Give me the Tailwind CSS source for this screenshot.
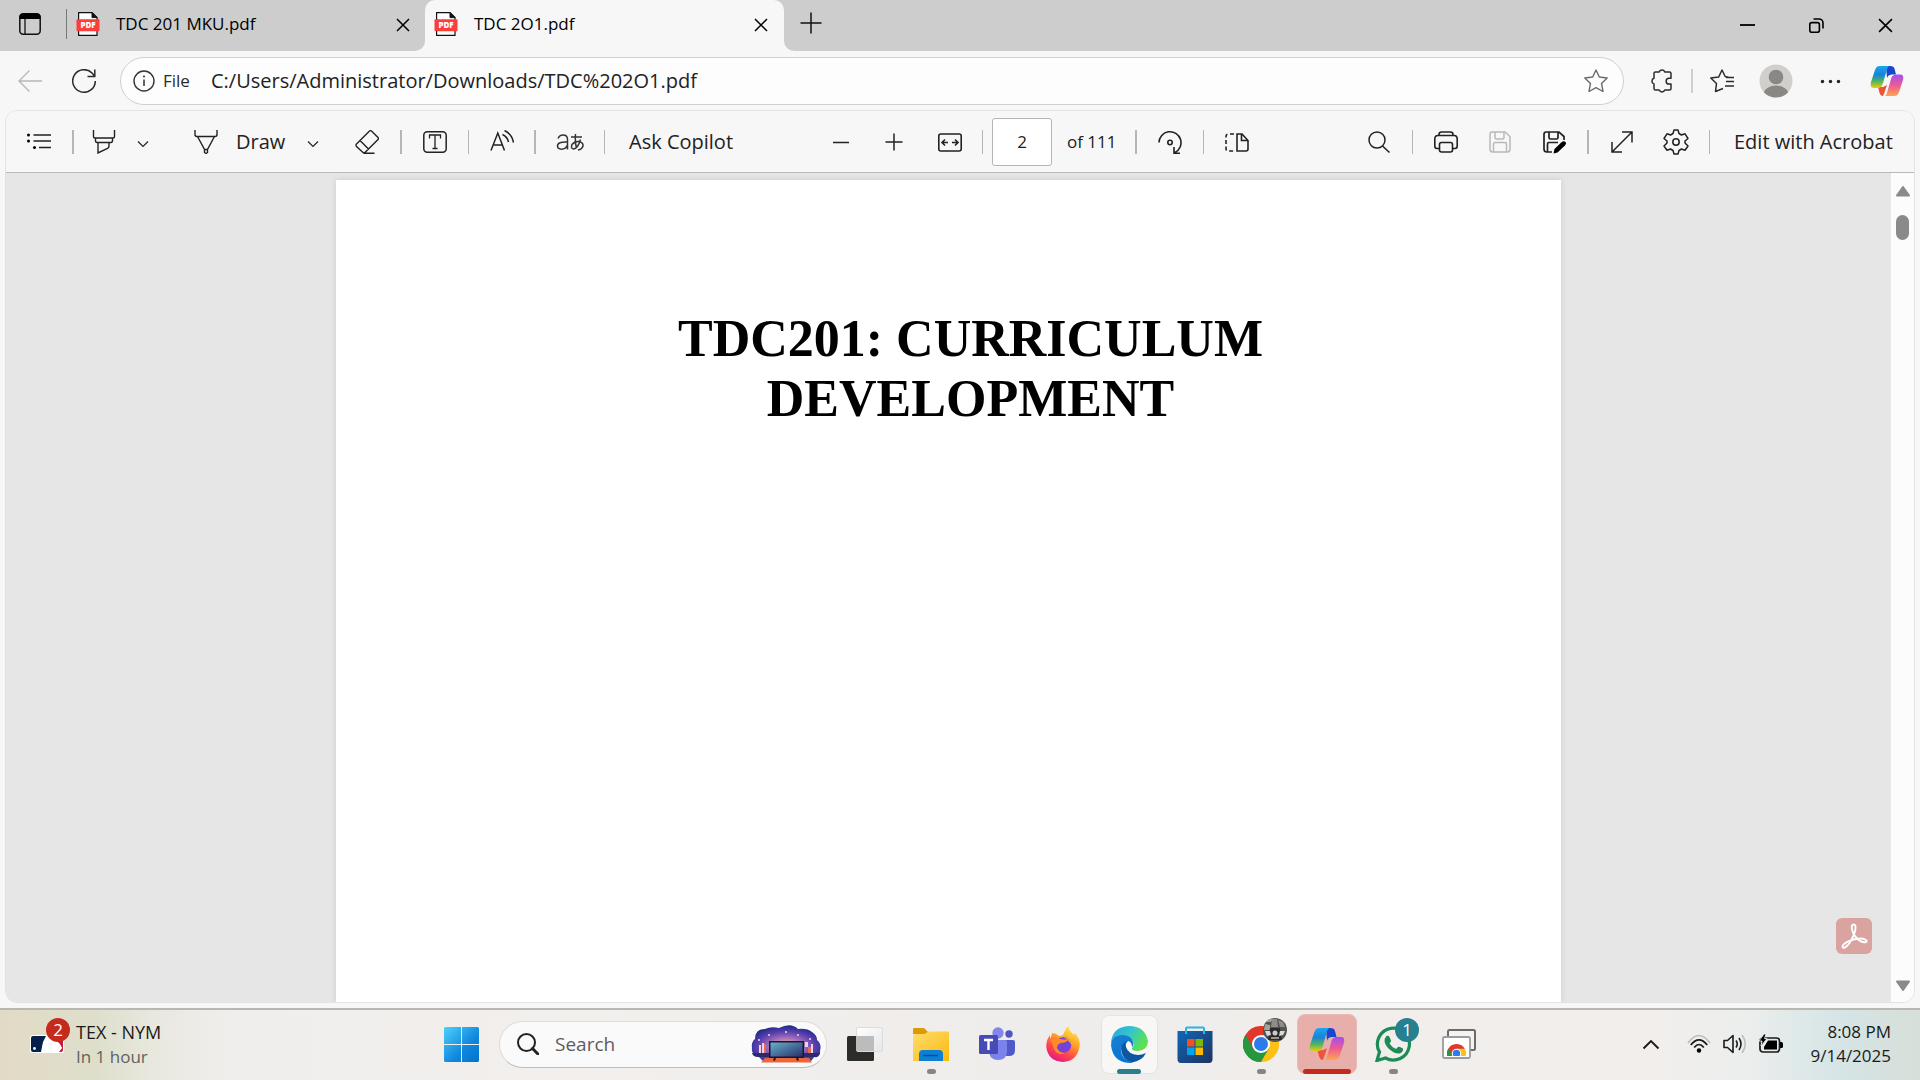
<!DOCTYPE html>
<html lang="en">
<head>
  <meta charset="UTF-8">
  <title>TDC 2O1.pdf</title>
  <script src="https://cdn.jsdelivr.net/npm/@tailwindcss/browser@4"></script>
</head>
<body class="h-screen flex flex-col overflow-hidden bg-[#f7f7f7] text-[#1b1b1b] font-['Open_Sans','Noto_Sans_CJK_JP',sans-serif]">

  <!-- Shared shapes -->
  <svg class="w-0 h-0" aria-hidden="true">
    <symbol id="pdf-file" viewBox="0 0 24 24">
      <path d="M2.6 .6H16L21 5.600V23.400H2.600Z" fill="#fff" stroke="#111" stroke-width="1.200"/>
      <path d="M16 .6V5.600H21Z" fill="#111" stroke="#111"/>
      <rect x="0.500" y="7.300" width="23" height="12" rx="1" fill="#fb3e3c"/>
    </symbol>
    <symbol id="cross" viewBox="0 0 14 14">
      <path d="M1 1 13 13M13 1 1 13" fill="none" stroke="currentColor" stroke-width="1.500"/>
    </symbol>
    <symbol id="chevron" viewBox="0 0 14 8">
      <path d="M2 1.500 7 6.500 12 1.500" fill="none" stroke="currentColor" stroke-width="1.200"/>
    </symbol>
    <linearGradient id="cp1" x1="0" y1="0" x2="0" y2="1"><stop offset="0" stop-color="#18a6f0"/><stop offset=".4" stop-color="#1684d8"/><stop offset=".7" stop-color="#52b65a"/><stop offset="1" stop-color="#f0cb10"/></linearGradient>
    <linearGradient id="cp2" x1="0" y1="0" x2="0" y2="1"><stop offset="0" stop-color="#a24ff0"/><stop offset=".5" stop-color="#ee5a94"/><stop offset="1" stop-color="#ffa54f"/></linearGradient>
    <symbol id="copilot" viewBox="0 0 34 32">
      <path d="M16 1H20C23 1 24 2 24.600 4L26 9.500H22C20 9.500 18 10 17 13Z" fill="#1a45cf"/>
      <path d="M8 22H13L17 20 14 29C13.500 30.500 13 31 12 31 10 30 9.600 28 9 26Z" fill="#ef5338"/>
      <path d="M10 1H20C18 1 17.400 3 16.800 5L13 18C12 21 11 23 7 23H4C.5 23 .3 20 1 17L5 5C6 2.500 7 1 10 1Z" fill="url(#cp1)"/>
      <path d="M24 31H14C16 31 16.600 29 17.200 27L21 14C22 11 23 9.500 27 9.500H30C33.500 9.500 33.700 12 33 15L29 27C28 29.500 27 31 24 31Z" fill="url(#cp2)"/>
    </symbol>
    <symbol id="chrome" viewBox="0 0 36 36">
      <path d="M18 18 2.400 9A18 18 0 0 1 33.600 9Z" fill="#e3372c"/>
      <path d="M18 18 33.600 9A18 18 0 0 1 18 36Z" fill="#fbc116"/>
      <path d="M18 18V36A18 18 0 0 1 2.400 9Z" fill="#26973f"/>
      <path d="M18 9H33.600L26 22Z" fill="#fbc116"/><path d="M10.200 22.500 2.400 9 18 9Z" fill="#e3372c"/><path d="M10.200 22.500 2.400 9A18 18 0 0 0 18 36L25.800 22.500Z" fill="#26973f"/>
      <circle cx="18" cy="18" r="9" fill="#fff"/><circle cx="18" cy="18" r="7" fill="#2b7bea"/>
    </symbol>
  </svg>

  <!-- Tab strip -->
  <header class="flex items-stretch h-[51px] bg-[#cdcdcd] text-black">
    <button class="w-[66px] pl-[19px] pb-1 flex items-center" aria-label="Tab actions">
      <svg class="w-[22px] h-[22px]" viewBox="0 0 22 22"><rect x=".8" y=".8" width="20.400" height="20.400" rx="3.500" fill="none" stroke="#111" stroke-width="1.500"/><path d="M.5 6V4A3.500 3.500 0 0 1 4 .5H18A3.500 3.500 0 0 1 21.500 4V6Z"/><path d="M6 6V21" stroke="#111" stroke-width="1.300"/></svg>
    </button>
    <div class="w-[359px] flex items-center pb-[3px]">
      <span class="w-px h-[30px] bg-[#777]"></span>
      <svg class="w-6 h-6 ml-[9px]" viewBox="0 0 24 24"><use href="#pdf-file"/><text x="12" y="16" text-anchor="middle" font-size="8" font-weight="800" fill="#fff">PDF</text></svg>
      <a href="#" class="ml-4 flex-1 text-[17px]">TDC 201 MKU.pdf</a>
      <button class="mr-[15px] mt-0.5" aria-label="Close tab"><svg class="w-3.5 h-3.5"><use href="#cross"/></svg></button>
    </div>
    <div class="relative w-[359px] flex items-center pb-[3px] bg-[#f7f7f7] rounded-t-[10px]">
      <svg class="absolute bottom-0 -left-[10px] w-[10px] h-[10px]" viewBox="0 0 10 10"><path d="M10 0V10H0A10 10 0 0 0 10 0Z" fill="#f7f7f7"/></svg>
      <svg class="absolute bottom-0 -right-[10px] w-[10px] h-[10px]" viewBox="0 0 10 10"><path d="M0 0V10H10A10 10 0 0 1 0 0Z" fill="#f7f7f7"/></svg>
      <svg class="w-6 h-6 ml-[9px]" viewBox="0 0 24 24"><use href="#pdf-file"/><text x="12" y="16" text-anchor="middle" font-size="8" font-weight="800" fill="#fff">PDF</text></svg>
      <a href="#" class="ml-4 flex-1 text-[17px]">TDC 2O1.pdf</a>
      <button class="mr-4 mt-0.5" aria-label="Close tab"><svg class="w-3.5 h-3.5"><use href="#cross"/></svg></button>
    </div>
    <button class="ml-4 pb-[5px]" aria-label="New tab"><svg class="w-[22px] h-[22px]" viewBox="0 0 22 22"><path d="M11 .5V21.500M.5 11H21.500" stroke="#111" stroke-width="1.500"/></svg></button>
    <div class="ml-auto mr-[27px] flex items-center gap-[54px]">
      <button aria-label="Minimize"><svg class="w-[15px] h-[15px]" viewBox="0 0 15 15"><path d="M0 7H15" stroke="#000" stroke-width="1.800"/></svg></button>
      <button aria-label="Restore"><svg class="w-[15px] h-[15px]" viewBox="0 0 15 15"><g fill="none" stroke="#000" stroke-width="1.600"><rect x=".8" y="4.600" width="9.600" height="9.600" rx="2"/><path d="M4.500 1H10A4 4 0 0 1 14 5V10.500"/></g></svg></button>
      <button aria-label="Close"><svg class="w-[15px] h-[15px]"><use href="#cross"/></svg></button>
    </div>
  </header>

  <!-- Address bar -->
  <nav class="flex items-center h-[59px] pt-px pl-[18px] pr-4 text-[#2b2b2b]">
    <button class="text-[#b8b8b8]" aria-label="Back"><svg class="w-6 h-6" viewBox="0 0 24 24"><path d="M24 12H1M11.500 1.500 1 12 11.500 22.500" fill="none" stroke="currentColor" stroke-width="1.400"/></svg></button>
    <button class="ml-[30px]" aria-label="Refresh"><svg class="w-6 h-6" viewBox="0 0 24 24"><path d="M23.300 12A11.300 11.300 0 1 1 20 4L22.600 7M22.800 .5V7.500H15.500" fill="none" stroke="currentColor" stroke-width="1.500"/></svg></button>
    <div class="ml-6 flex-1 flex items-center h-12 pl-3 pr-[15px] rounded-full bg-[#fdfdfd] border border-[#cfcfcf]">
      <svg class="w-[22px] h-[22px]" viewBox="0 0 22 22"><circle cx="11" cy="11" r="10" fill="none" stroke="#333" stroke-width="1.400"/><circle cx="11" cy="6.500" r="1" fill="#333"/><path d="M11 9.500V16" stroke="#333" stroke-width="1.500"/></svg>
      <label for="url" class="ml-2 w-12 text-[17px]">File</label>
      <input id="url" type="text" class="flex-1 text-[20px] leading-[28px] outline-none text-[#222]" value="C:/Users/Administrator/Downloads/TDC%202O1.pdf">
      <button aria-label="Add to favorites"><svg class="w-6 h-6" viewBox="0 0 24 24"><path d="M12 1 15.300 8 23.200 9 17.500 14.400 19 22.500 12 18.700 5 22.500 6.500 14.400 .8 9 8.700 8Z" fill="none" stroke="#6b6b6b" stroke-width="1.400" stroke-linejoin="round"/></svg></button>
    </div>
    <button class="ml-[26px]" aria-label="Extensions"><svg class="w-6 h-6" viewBox="0 0 24 24"><path d="M5.500 3H9.200A3 3 0 0 1 14.800 3H19.500Q21 3 21 4.500V9.300H19A2.800 2.800 0 0 0 19 15H21V19.500Q21 21 19.500 21H14.800A3 3 0 0 1 9.200 21H5.500Q4 21 4 19.500V15A3 3 0 0 1 4 9.300V4.500Q4 3 5.500 3Z" fill="none" stroke="currentColor" stroke-width="1.500" stroke-linejoin="round"/></svg></button>
    <span class="ml-[17px] w-0.5 h-6 bg-[#cfcfcf]"></span>
    <button class="ml-[17px]" aria-label="Favorites"><svg class="w-6 h-6" viewBox="0 0 24 24"><path d="M13 19.500 5.500 22.500 6.500 14.500 .8 9 8.700 8 12 1 15.200 7.500 19 8.500M16 12.500H24M15 17H24M16 8.500H24" fill="none" stroke="currentColor" stroke-width="1.500" stroke-linejoin="round"/></svg></button>
    <button class="ml-[25px]" aria-label="Profile"><svg class="w-[34px] h-[34px]" viewBox="0 0 34 34"><clipPath id="av"><circle cx="17" cy="17" r="16.500"/></clipPath><g clip-path="url(#av)"><rect width="34" height="34" fill="#d1cfcc"/><circle cx="17" cy="13" r="7.300" fill="#8b8785"/><ellipse cx="17" cy="32" rx="13" ry="10.500" fill="#8b8785"/></g></svg></button>
    <button class="ml-[27px]" aria-label="More"><svg class="w-[21px] h-6" viewBox="0 0 21 24" fill="#222"><circle cx="2.500" cy="12.500" r="1.700"/><circle cx="10.500" cy="12.500" r="1.700"/><circle cx="18.500" cy="12.500" r="1.700"/></svg></button>
    <button class="ml-[29px]" aria-label="Copilot"><svg class="w-[34px] h-8"><use href="#copilot"/></svg></button>
  </nav>

  <!-- PDF viewer -->
  <main class="flex-1 min-h-0 ml-[5px] mr-[5px] mb-[5px] flex flex-col rounded-xl border border-[#e3e3e3] overflow-hidden relative">
    <div class="flex items-center h-[62px] pl-[21px] pr-5 border-b border-[#b9b9b9] bg-[#f7f7f7] text-[#222] text-[20px] whitespace-nowrap">
      <button aria-label="Contents"><svg class="w-6 h-6" viewBox="0 0 24 24"><path d="M6.500 5H24M6.500 11H24M12 17.500H24" stroke="currentColor" stroke-width="1.300"/><circle cx="1.500" cy="5" r="1.500"/><circle cx="1.500" cy="11" r="1.500"/><circle cx="7.500" cy="17.500" r="1.500"/></svg></button>
      <span class="ml-[21px] mr-[18px] w-0.5 h-6 bg-[#b5b5b5]"></span>
      <button aria-label="Highlight"><svg class="w-6 h-6" viewBox="0 0 24 24"><g fill="none" stroke="currentColor" stroke-width="1.400"><path d="M1.500 0V6.500Q1.500 8 3 8H21Q22.500 8 22.500 6.500V0M3.500 8V10.500Q3.500 12.500 5 12.500H19Q20.500 12.500 20.500 10.500V8M6 12.500V23L15.500 18.500Q17 17.500 17 16V12.500"/></g></svg></button>
      <button class="ml-5" aria-label="Highlight options"><svg class="w-3.5 h-2 mt-1"><use href="#chevron"/></svg></button>
      <button class="ml-11 flex items-center gap-[18px]"><svg class="w-6 h-6" viewBox="0 0 24 24"><g fill="none" stroke="currentColor" stroke-width="1.400"><path d="M1 0V4.500Q1 6.500 3 6.500H21Q23 6.500 23 4.500V0M3.500 6.500 10.500 19.500V22.500L12 23.500 13.500 22.500V19.500L20.500 6.500M10.500 19.500H13.500"/></g></svg><span class="w-[52px] text-left">Draw</span></button>
      <button class="ml-[18px]" aria-label="Draw options"><svg class="w-3.5 h-2 mt-1"><use href="#chevron"/></svg></button>
      <button class="ml-[35px]" aria-label="Erase"><svg class="w-6 h-6" viewBox="0 0 24 24"><path d="M14.500 1 Q15.500 .3 16.500 1L23 7.500Q23.800 8.500 23 9.500L10.500 22Q9 23.500 7.500 22L1.500 16.500Q.5 15 1.500 14ZM5 10.500 13.500 19M8.500 23.300H19.500" fill="none" stroke="currentColor" stroke-width="1.400"/></svg></button>
      <span class="mx-[21px] w-0.5 h-6 bg-[#b5b5b5]"></span>
      <button aria-label="Add text"><svg class="w-6 h-6" viewBox="0 0 24 24"><g fill="none" stroke="currentColor" stroke-width="1.300"><rect x=".8" y="1.800" width="22.400" height="20.400" rx="3.500" stroke-width="1.500"/><path d="M6.500 8.500V5H17.500V8.500M12 5V18.500M9.500 18.500H14.500"/></g></svg></button>
      <span class="mx-[21px] w-px h-6 bg-[#b5b5b5]"></span>
      <button aria-label="Read aloud"><svg class="w-6 h-6" viewBox="0 0 24 24"><path d="M1 20.500 7.800 3 14.500 20.500M3.500 15H12M12.500 4.500Q17.500 7 18.500 12M14.500 .5Q22 4 23.500 12.500" fill="none" stroke="currentColor" stroke-width="1.500"/></svg></button>
      <span class="mx-5 w-0.5 h-6 bg-[#b5b5b5]"></span>
      <button class="w-7 flex items-center text-[#333]" aria-label="Translate"><svg class="w-7 h-6" viewBox="0 0 28 24"><g fill="none" stroke="currentColor" stroke-width="1.500"><path d="M2 8.500Q3.500 5 7 5 11.500 5 11.500 9.500V19.500M11.500 12Q1.500 11.500 1.500 16 1.500 19 5.500 19.200 10 19 11.500 15M15 7H26M19.500 4Q18.800 12 20.500 18M24.500 9.500Q22 18.500 17.500 19 14.500 18.500 16 14.500 18.500 11 23 11.500 27.500 12.500 27 16 26 19.500 22 20"/></g></svg></button>
      <span class="ml-5 mr-6 w-px h-6 bg-[#b5b5b5]"></span>
      <button class="w-[106px] text-left">Ask Copilot</button>
      <button class="ml-[94px]" aria-label="Zoom out"><svg class="w-6 h-6" viewBox="0 0 24 24"><path d="M4 12.500H20" stroke="currentColor" stroke-width="1.500"/></svg></button>
      <button class="ml-[29px]" aria-label="Zoom in"><svg class="w-6 h-6" viewBox="0 0 24 24"><path d="M3.500 12H20.500M12 3.500V20.500" stroke="currentColor" stroke-width="1.500"/></svg></button>
      <button class="ml-8" aria-label="Fit to width"><svg class="w-6 h-6" viewBox="0 0 24 24"><g fill="none" stroke="currentColor" stroke-width="1.600"><rect x=".8" y="4" width="22.400" height="17" rx="2"/><path d="M10 12.500H4.500M7 9.500 4 12.500 7 15.500M14 12.500H19.500M17 9.500 20 12.500 17 15.500"/></g></svg></button>
      <span class="ml-5 w-px h-6 bg-[#b5b5b5]"></span>
      <input id="page" type="text" value="2" class="ml-[9px] w-[60px] h-12 bg-white border border-[#b5b5b5] rounded-[3px] text-center text-[17px]">
      <label for="page" class="ml-[15px] w-[52px] text-[17px]">of 111</label>
      <span class="ml-4 mr-[21px] w-0.5 h-6 bg-[#b5b5b5]"></span>
      <button aria-label="Rotate"><svg class="w-6 h-6" viewBox="0 0 24 24"><g fill="none" stroke="currentColor" stroke-width="1.600"><path d="M1 12.500A11 11 0 1 1 17 22.500M16 17V23.200H22"/><circle cx="12" cy="12.500" r="2.200"/></g></svg></button>
      <span class="mx-[21px] w-px h-6 bg-[#b5b5b5]"></span>
      <button aria-label="Page view"><svg class="w-6 h-6" viewBox="0 0 24 24"><g fill="none" stroke="currentColor" stroke-width="1.600"><path d="M12 4H17L23 10.500V19Q23 21 21 21H12ZM16.500 4V10.500H23"/><path d="M9 4H3.500Q1 4 1 6.500V18.500Q1 21 3.500 21H9" stroke-dasharray="4 2.500"/></g></svg></button>

      <div class="ml-auto flex items-center">
        <button aria-label="Find"><svg class="w-6 h-6" viewBox="0 0 24 24"><circle cx="10" cy="10" r="8" fill="none" stroke="currentColor" stroke-width="1.500"/><path d="M15.500 16 22.500 22.500" stroke="currentColor" stroke-width="1.600"/></svg></button>
        <span class="mx-[21px] w-px h-6 bg-[#b5b5b5]"></span>
        <button aria-label="Print"><svg class="w-6 h-6" viewBox="0 0 24 24"><g fill="none" stroke="currentColor" stroke-width="1.600"><path d="M5 5.500V4.500Q5 2 7.500 2H16.500Q19 2 19 4.500V5.500M5.500 18.500H3Q.8 18.500 .8 16V9Q.8 5.500 4 5.500H20Q23.200 5.500 23.200 9V16Q23.200 18.500 21 18.500H18.500"/><rect x="5.500" y="12.500" width="13" height="9.500" rx="2"/></g></svg></button>
        <button class="ml-[30px] text-[#b9b9b9]" aria-label="Save"><svg class="w-6 h-6" viewBox="0 0 24 24"><path d="M4 2H17L22 6.500V19Q22 22 19.500 22H4.500Q2 22 2 19V4.500Q2 2 4 2ZM7 2V7.500Q7 9 8.500 9H14.500Q16 9 16 7.500V2M5.500 22V14Q5.500 12.500 7 12.500H17Q18.500 12.500 18.500 14V22" fill="none" stroke="currentColor" stroke-width="1.500"/></svg></button>
        <button class="ml-[30px]" aria-label="Save as"><svg class="w-6 h-6" viewBox="0 0 24 24"><path d="M10 22H4.500Q2 22 2 19V4.500Q2 2 4 2H17L22 6.500V10M7 2V7.500Q7 9 8.500 9H14.500Q16 9 16 7.500V2M5.500 22V14Q5.500 12.500 7 12.500H16" fill="none" stroke="currentColor" stroke-width="1.700"/><path d="M11.500 23.500 12.500 19 20 11.800Q22 10.500 23.500 12 24.500 13.500 23 15.500L15.500 22.500Z"/></svg></button>
        <span class="mx-[21px] w-0.5 h-6 bg-[#b5b5b5]"></span>
        <button aria-label="Full screen"><svg class="w-6 h-6" viewBox="0 0 24 24"><path d="M2 22 22 2M12 2H22V12.500M2 12V22H12" fill="none" stroke="currentColor" stroke-width="1.500"/></svg></button>
        <button class="ml-[29px]" aria-label="Settings"><svg class="w-[26px] h-[26px]" viewBox="0 0 26 26"><g fill="none" stroke="currentColor" stroke-width="1.500" stroke-linejoin="round"><path d="M11 1H15L16 4.500 18.500 6 22 4.800 25 9.500 22 12 V14L25 17 22 21.200 18.500 20 16 21.500 15 25H11L10 21.500 7.500 20 4 21.200 1 17 4 14V12L1 9.500 4 4.800 7.500 6 10 4.500Z"/><circle cx="13" cy="13" r="3.200"/></g></svg></button>
        <span class="ml-5 mr-6 w-px h-6 bg-[#b5b5b5]"></span>
        <button class="w-[160px] text-left">Edit with Acrobat</button>
      </div>
    </div>

    <div class="flex-1 min-h-0 flex bg-[#e6e6e6]">
      <div class="flex-1 pt-[7px] flex justify-center">
        <article class="w-[1225px] h-full bg-white shadow-[0_0_6px_rgba(0,0,0,0.12)]">
          <h1 class="pt-[129px] pl-11 text-center text-[52px] leading-[60px] font-bold text-black font-['Liberation_Serif',serif]">TDC201: CURRICULUM<br>DEVELOPMENT</h1>
        </article>
      </div>
      <!-- Scrollbar -->
      <div class="w-[23px] bg-[#fcfcfc] flex flex-col items-center pt-3 pb-[10px] text-[#8a8a8a]">
        <svg class="w-4 h-3" viewBox="0 0 16 12"><path d="M8 2 14 10.500H2Z" fill="currentColor" stroke="currentColor" stroke-width="2" stroke-linejoin="round"/></svg>
        <span class="mt-[18px] w-[13px] h-[25px] rounded-full bg-[#8a8a8a]"></span>
        <svg class="mt-auto w-4 h-3" viewBox="0 0 16 12"><path d="M8 10 14 1.500H2Z" fill="currentColor" stroke="currentColor" stroke-width="2" stroke-linejoin="round"/></svg>
      </div>
    </div>

    <button class="absolute right-[42px] bottom-12 w-9 h-9 rounded-md bg-[#d9a3a0]" aria-label="Open in Acrobat">
      <svg class="w-9 h-9" viewBox="0 0 36 36"><path d="M17.500 6.500C14.500 6.500 15.500 13 19 18 22 22.500 27 25 30 24 32 22.500 29 20.500 24 20.500 17 20.500 7 25 6.500 28.500 6.500 31 10 30 13.500 25 17 19.500 19.800 12 19.500 8.500 19.300 7 18.500 6.500 17.500 6.500Z" fill="none" stroke="#fff" stroke-width="1.900"/></svg>
    </button>
  </main>

  <!-- Taskbar -->
  <footer class="grid grid-cols-[1fr_auto_1fr] items-center h-[72px] pb-0.5 border-t-2 border-[#b9b7b2] bg-[linear-gradient(90deg,#e2dac6_0%,#dedfcb_5%,#e8e8df_8%,#f0eeec_12%,#f2efed_30%,#efedeb_55%,#f2eeec_86%,#ebeeed_91%,#d5e4e5_96%,#d7dfd8_100%)]">
    <a href="#" class="flex items-center pl-[30px] text-[17px] leading-6">
      <span class="relative w-[34px] h-[18px]">
        <svg class="w-[34px] h-[18px]" viewBox="0 0 34 18"><rect width="34" height="18" rx="2.500" fill="#fff"/><path d="M3 1H16L13 7 11 17H3Q1 17 1 15V3Q1 1 3 1Z" fill="#06204a"/><path d="M22 1H31Q33 1 33 3V15Q33 17 31 17H28L32 13 30 9Z" fill="#c8163f"/><path d="M17 3 20 2 23 5 22 7 29 9 32 13 29 17H12Q15 15 15 12L12 11 14 9Z" fill="#fff"/><circle cx="4.500" cy="13.500" r="1.400" fill="#fff"/></svg>
        <span class="absolute -top-[17px] left-4 w-6 h-6 rounded-full bg-[#c42b1c] text-white text-[17px] leading-6 text-center">2</span>
      </span>
      <span class="ml-3 text-[#1a1a1a]"><span class="text-[18px]">TEX - NYM</span><br><span class="text-[#62625e]">In 1 hour</span></span>
    </a>

    <div class="flex items-center gap-2 h-[62px]">
      <button class="w-[60px] flex justify-center" aria-label="Start">
        <svg class="w-[35px] h-[35px]" viewBox="0 0 35 35"><linearGradient id="win" x1="0" y1="0" x2="1" y2="1"><stop offset="0" stop-color="#4fd0fb"/><stop offset=".6" stop-color="#0f88dc"/><stop offset="1" stop-color="#0173cf"/></linearGradient><path d="M1.500 0H17V17H0V1.500Q0 0 1.500 0ZM18 0H33.500Q35 0 35 1.500V17H18ZM0 18H17V35H1.500Q0 35 0 33.500ZM18 18H35V33.500Q35 35 33.500 35H18Z" fill="url(#win)"/></svg>
      </button>
      <div class="w-[328px] h-[47px] flex items-center pl-[17px] pr-[5px] rounded-full bg-[#fafafa] border border-[#dedcda] border-b-[#bfbdbc]">
        <svg class="w-[22px] h-[22px]" viewBox="0 0 22 22"><circle cx="9.500" cy="9.500" r="8.500" fill="none" stroke="#222" stroke-width="2"/><path d="M15.500 15.500 21 21" stroke="#222" stroke-width="3" stroke-linecap="round"/></svg>
        <input type="text" placeholder="Search" aria-label="Search" class="ml-4 flex-1 min-w-0 text-[19px] leading-7 outline-none placeholder:text-[#5d5d5d]">
        <svg class="w-[70px] h-[38px]" viewBox="0 0 70 38">
          <defs><radialGradient id="sky" cx=".5" cy=".6" r=".6"><stop offset="0" stop-color="#f8c58a"/><stop offset=".35" stop-color="#b57bb8"/><stop offset=".7" stop-color="#5a3fb0"/><stop offset="1" stop-color="#1d2a86"/></radialGradient><linearGradient id="tv" x1="0" y1="0" x2="1" y2="1"><stop offset="0" stop-color="#67b0cf"/><stop offset="1" stop-color="#283067"/></linearGradient></defs>
          <path d="M6 30Q0 29 1 23 0 17 4 14 4 4 14 4 20 1 28 3 40-3 47 4 56 3 61 7 66 10 66 15 71 19 69 26 70 31 64 31L60 36H12Z" fill="url(#sky)"/>
          <path d="M1 28H69Q68 33 63 32H7Q2 32 1 28Z" fill="#2a2a70"/><path d="M14 33H58L61 37.500H10Z" fill="#f0643a"/>
          <path d="M8 20H10V28H8ZM11 18H13V28H11ZM54 17H57V22H54ZM60 19H62V28H60Z" fill="#e9d4e8"/><path d="M13 19H15V28H13ZM57 22H60V28H57Z" fill="#e86a5b"/>
          <g fill="#f6d6e8"><circle cx="18" cy="10" r="1"/><circle cx="35" cy="7" r="1"/><circle cx="47" cy="10" r="1"/><circle cx="59" cy="14" r="1"/><circle cx="8" cy="15" r="1"/></g>
          <path d="M24 33 23 35.500M46 33 47 35.500" stroke="#111" stroke-width="2"/><rect x="18" y="16" width="35" height="17" fill="#1a1830"/><rect x="19.500" y="17.500" width="32" height="14" fill="url(#tv)"/>
        </svg>
      </div>
      <div class="flex items-center gap-1.5 h-[60px]">
        <button class="w-[60px] flex justify-center" aria-label="Task view">
          <svg class="w-9 h-[34px]" viewBox="0 0 36 34"><linearGradient id="tk" x1="0" y1="0" x2="1" y2="1"><stop offset="0" stop-color="#fff"/><stop offset="1" stop-color="#e4e7e8"/></linearGradient><rect y="9" width="27" height="25" rx="1.500" fill="#2c2c2b"/><rect x="9.500" y=".5" width="26" height="24" rx="1.500" fill="url(#tk)" stroke="#dcdcdc"/><path d="M9 9H27V24H9Z" fill="#bcbcbc"/></svg>
        </button>
        <button class="relative w-[60px] h-[60px] flex justify-center items-center" aria-label="File Explorer">
          <svg class="w-9 h-[33px]" viewBox="0 0 36 33"><linearGradient id="fe" x1="0" y1="0" x2="1" y2="1"><stop offset="0" stop-color="#ffdd6e"/><stop offset="1" stop-color="#fbb90e"/></linearGradient><path d="M0 1Q0 0 1 0H10Q12 0 13 2L15 4V9H0Z" fill="#dd9a06"/><path d="M0 6H10Q12 6 14 4.500 15 3.500 17 3.500H35Q36 3.500 36 4.500V33H0Z" fill="url(#fe)"/><path d="M6 33V26Q6 22 10 22H26Q30 22 30 26V33Z" fill="#0e80d4"/><path d="M10 27.500H25" stroke="#07508f" stroke-width="1.500"/></svg>
          <span class="absolute bottom-0 w-[9px] h-[5px] rounded-full bg-[#868484]"></span>
        </button>
        <button class="w-[60px] flex justify-center" aria-label="Teams">
          <svg class="w-9 h-[34px]" viewBox="0 0 36 34"><circle cx="30" cy="7" r="3.700" fill="#4e55c0"/><circle cx="19" cy="6" r="5.700" fill="#8387ec"/><path d="M24 13H34Q36 13 36 15V23Q36 29 30 29H24Z" fill="#5059c9"/><path d="M11 13H26Q28 13 28 15V24Q28 33 19 33 11 33 10 25Z" fill="#7b83eb"/><rect y="8" width="19" height="19" rx="1.500" fill="#464bb5"/><path d="M5 13H14M9.500 13V23" stroke="#fff" stroke-width="2.400"/></svg>
        </button>
        <button class="w-[60px] flex justify-center" aria-label="Firefox">
          <svg class="w-[34px] h-9" viewBox="0 0 34 36"><defs><linearGradient id="ff" x1=".8" y1="0" x2=".3" y2="1"><stop offset="0" stop-color="#fff14a"/><stop offset=".4" stop-color="#ffa22b"/><stop offset=".7" stop-color="#ff4a45"/><stop offset="1" stop-color="#e31587"/></linearGradient></defs><path d="M22 0Q24 6 28 9L29 7Q35 14 33.500 21 31 35 17 36 2 35 .3 21 0 14 4 9L4 13Q6 10 6 7 10 7 13 10 17 10 18 7 19 3 22 0Z" fill="url(#ff)"/><circle cx="17.500" cy="19" r="7.800" fill="#7641d8"/><path d="M5 14Q9 11 14 13L22 14Q20 17 15 17 11 18 11 22 13 27 19 27 11 30 8 23Z" fill="#ff8a2c"/><path d="M18 12Q24 12 25.500 19 23 14 18 12Z" fill="#ffc23e"/></svg>
        </button>
        <button class="relative w-[60px] h-[60px] flex justify-center items-center" aria-label="Edge">
          <span class="w-[57px] h-[59px] rounded-lg bg-[#f8f7f6] border border-[#e6e4e2] flex items-center justify-center">
            <svg class="w-[37px] h-[37px]" viewBox="0 0 37 37"><defs><linearGradient id="e1" x1="0" y1="0" x2="1" y2=".5"><stop offset="0" stop-color="#2ba0d8"/><stop offset=".5" stop-color="#33c5cf"/><stop offset="1" stop-color="#5ce24f"/></linearGradient><linearGradient id="e2" x1="0" y1="0" x2=".5" y2="1"><stop offset="0" stop-color="#1a7fd0"/><stop offset="1" stop-color="#0675d8"/></linearGradient></defs><path d="M0 17Q1 1 18 0 34 0 37 15 37 24 27 25 20 25 21 22 25 18 20 13 11 7 0 17Z" fill="url(#e1)"/><path d="M0 19Q1 9 11 9 20 9 22 16 23 19 21 21 21 16 17 15L10 22Q9 33 22 37 2 38 0 19Z" fill="url(#e2)"/><path d="M17 15Q10 17 10 23 11 34 21 36.500 31 35 35 27 31 29 27 29 17 28 15 21 14 17 17 15Z" fill="#0f56a0"/></svg>
          </span>
          <span class="absolute bottom-0 w-6 h-[5px] rounded-full bg-[#26808f]"></span>
        </button>
        <button class="w-[60px] flex justify-center" aria-label="Microsoft Store">
          <svg class="w-9 h-[37px]" viewBox="0 0 36 37"><linearGradient id="st" x1="0" y1="0" x2="1" y2="1"><stop offset="0" stop-color="#0e68b5"/><stop offset="1" stop-color="#1f3260"/></linearGradient><path d="M.5 5H35.500V33Q35.500 37 32 37H4Q.5 37 .5 33Z" fill="url(#st)"/><path d="M9 8V2.500Q9 1.500 10 1.500H26Q27 1.500 27 2.500V8" fill="none" stroke="#29b4ea" stroke-width="2"/><path d="M10 13H17.500V20.500H10Z" fill="#f25022"/><path d="M18.500 13H26V20.500H18.500Z" fill="#7fba00"/><path d="M10 21.500H17.500V29H10Z" fill="#00a4ef"/><path d="M18.500 21.500H26V29H18.500Z" fill="#ffb900"/></svg>
        </button>
        <button class="relative w-[60px] h-[60px] flex justify-center items-center" aria-label="Chrome">
          <svg class="w-9 h-9"><use href="#chrome"/></svg>
          <svg class="absolute top-1 left-8 w-6 h-6" viewBox="0 0 24 24"><clipPath id="pf"><circle cx="12" cy="12" r="12"/></clipPath><g clip-path="url(#pf)"><rect width="24" height="24" fill="#55554f"/><path d="M0 4H8L10 0H3ZM1 12H7V7L2 6Z" fill="#a3a298"/><path d="M15 2 20 4 22 9H17Z" fill="#8d8c86"/><path d="M9 1H14L15 9H8Z" fill="#8f8e86"/><path d="M7 10H17L19 22H5Z" fill="#2a2a2c"/><path d="M2 13H7L8 17 4 18ZM17 13H22L20 17 16 18Z" fill="#d9dade"/><circle cx="12" cy="15" r="2.500" fill="#c9c9c6"/><path d="M8 19H16V21H8Z" fill="#96958f"/></g></svg>
          <span class="absolute bottom-0 w-[9px] h-[5px] rounded-full bg-[#868484]"></span>
        </button>
        <button class="relative w-[60px] h-[60px] flex justify-center items-center rounded-lg bg-[#e8aeaa] border border-[#ecbab6]" aria-label="Copilot">
          <svg class="w-9 h-[34px]"><use href="#copilot"/></svg>
          <span class="absolute -bottom-px w-12 h-[5px] rounded-full bg-[#c42b1c]"></span>
        </button>
        <button class="relative w-[60px] h-[60px] flex justify-center items-center" aria-label="WhatsApp">
          <svg class="w-9 h-9" viewBox="0 0 36 36"><path d="M2 34.500 4.500 26A16 16 0 1 1 10.500 32Z" fill="none" stroke="#1c8b55" stroke-width="3.200"/><path d="M11.500 10Q13.500 9 14.500 11L16 14.500Q16 16 14.500 17.500 17 21.500 21 23L23 21Q24 20.500 25 21L28 22.500Q28.500 26 24.500 27.500 19 28 13 22 7 15 11.500 10Z" fill="#1c8b55"/></svg>
          <span class="absolute top-1 left-8 w-6 h-6 rounded-full bg-[#26808f] text-white text-[17px] leading-6 text-center">1</span>
          <span class="absolute bottom-0 w-[9px] h-[5px] rounded-full bg-[#868484]"></span>
        </button>
        <button class="w-[60px] flex justify-center" aria-label="Remote Desktop">
          <svg class="w-[34px] h-[30px]" viewBox="0 0 34 30"><rect x="6" y="1" width="27" height="20" rx="1.500" fill="#f3f3f3" stroke="#6b6b6b" stroke-width="2"/><rect x="1" y="8" width="27" height="21" rx="1.500" fill="#fff" stroke="#9b9b9b" stroke-width="1.800"/><clipPath id="rd"><path d="M2 9H27V27H2Z"/></clipPath><g clip-path="url(#rd)"><svg x="5" y="15" width="19" height="19" viewBox="0 0 36 36"><use href="#chrome"/></svg></g></svg>
        </button>
      </div>
    </div>

    <div class="flex items-center justify-end pr-[29px] text-[17px] leading-6 text-[#1a1a1a]">
      <button aria-label="Hidden icons"><svg class="w-[18px] h-[11px]" viewBox="0 0 18 11"><path d="M1.500 9.500 9 2 16.500 9.500" fill="none" stroke="currentColor" stroke-width="1.900"/></svg></button>
      <button class="ml-[27px] flex items-center gap-3" aria-label="Network, volume and battery">
        <svg class="w-6 h-5" viewBox="0 0 24 20"><g fill="none" stroke="currentColor" stroke-width="1.700"><path d="M1 9Q12-6 23 9" stroke="#bdbdbd"/><path d="M3.800 11Q12 .8 20.200 11M7.200 13.500Q12 7.500 16.800 13.500"/></g><circle cx="12" cy="16.500" r="2.200"/></svg>
        <svg class="w-6 h-5" viewBox="0 0 24 20"><g fill="none" stroke="currentColor" stroke-width="1.600" stroke-linejoin="round"><path d="M1 6.500H4.500L10 1.500V18.500L4.500 13.500H1ZM13 6.500Q15.500 10 13 13.500M16 4Q20 10 16 16"/><path d="M19 1Q25.500 10 19 19" stroke="#bdbdbd"/></g></svg>
        <svg class="w-6 h-5" viewBox="0 0 24 20"><rect x="1" y="4" width="19.500" height="14" rx="3" fill="none" stroke="currentColor" stroke-width="1.700"/><path d="M5 15.500V13L9 6.500H18V15.500Z"/><path d="M21 8H22.500Q24 8 24 9.500V12.500Q24 14 22.500 14H21Z"/><path d="M5 0 0 7H3L2 12 8 4.500H5.500L7 0Z" stroke="#eef0f0" stroke-width=".8"/></svg>
      </button>
      <button class="ml-[25px] w-[83px] text-right whitespace-nowrap">8:08 PM<br>9/14/2025</button>
    </div>
  </footer>

</body>
</html>
